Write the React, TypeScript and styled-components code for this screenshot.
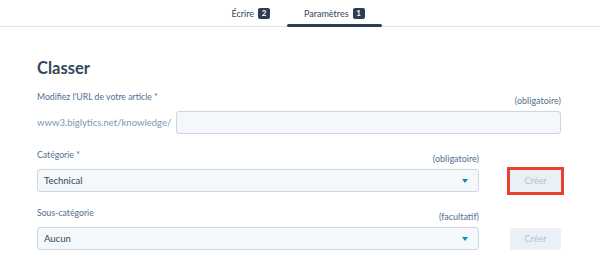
import React from "react";
import styled, { createGlobalStyle } from "styled-components";

const Global = createGlobalStyle`
  html, body { margin: 0; padding: 0; background: #fff; }
  body { font-family: Lato, "Open Sans", sans-serif; color: #33475b; }
`;

const Page = styled.div`
  width: 600px;
  height: 280px;
  overflow: hidden;
  background: #fff;
`;

const TabBar = styled.nav`
  display: flex;
  justify-content: center;
  height: 26px;
  border-bottom: 1px solid #dfe3eb;
  padding-right: 4px;
`;

const Tab = styled.div<{ $active?: boolean }>`
  display: flex;
  align-items: center;
  gap: 4px;
  padding: 0 17px;
  height: 26px;
  box-sizing: border-box;
  font-size: 9px;
  color: #33475b;
  position: relative;
  &::after {
    content: "";
    display: ${(p) => (p.$active ? "block" : "none")};
    position: absolute;
    left: 0;
    right: 0;
    bottom: -1px;
    height: 3px;
    border-radius: 2px;
    background: #2d3e50;
  }
`;

const Badge = styled.span`
  display: inline-flex;
  align-items: center;
  justify-content: center;
  width: 12px;
  height: 11px;
  border-radius: 2px;
  background: #2d3e50;
  color: #fff;
  font-size: 8px;
  font-weight: 700;
`;

const Main = styled.main`
  padding: 31px 39px 0 37px;
`;

const Heading = styled.h2`
  margin: 0 0 14px;
  font-size: 16.5px;
  line-height: 20px;
  font-weight: 700;
  color: #33475b;
`;

const Field = styled.div`
  margin-bottom: 16px;
`;

const FieldHead = styled.div<{ $narrow?: boolean }>`
  display: flex;
  justify-content: space-between;
  height: 14px;
  margin-bottom: 5px;
  margin-right: ${(p) => (p.$narrow ? "82px" : "0")};
`;

const Label = styled.label`
  font-size: 8.7px;
  line-height: 10px;
  color: #516f90;
  align-self: flex-start;
`;

const Hint = styled.span`
  font-size: 9px;
  line-height: 10px;
  color: #516f90;
  align-self: flex-end;
`;

const UrlRow = styled.div`
  display: flex;
  align-items: center;
  gap: 5px;
`;

const Prefix = styled.span`
  font-size: 9.5px;
  color: #7c98b6;
  white-space: nowrap;
`;

const TextInput = styled.div`
  flex: 1;
  height: 23px;
  box-sizing: border-box;
  background: #f5f8fa;
  border: 1px solid #cbd6e2;
  border-radius: 3px;
`;

const SelectRow = styled.div`
  display: grid;
  grid-template-columns: 1fr 51px;
  column-gap: 31px;
  align-items: center;
`;

const Select = styled.div`
  display: flex;
  align-items: center;
  justify-content: space-between;
  height: 23px;
  box-sizing: border-box;
  padding: 0 10px 0 6px;
  background: #f5f8fa;
  border: 1px solid #cbd6e2;
  border-radius: 3px;
  font-size: 9.5px;
  color: #33475b;
`;

const Caret = styled.span`
  width: 0;
  height: 0;
  border-left: 3.5px solid transparent;
  border-right: 3.5px solid transparent;
  border-top: 4px solid #0091ae;
`;

const ButtonWrap = styled.div<{ $highlight?: boolean }>`
  position: relative;
  &::after {
    content: "";
    display: ${(p) => (p.$highlight ? "block" : "none")};
    position: absolute;
    left: -3px;
    right: -3px;
    top: -3px;
    bottom: -3px;
    border: 3px solid #e8412e;
  }
`;

const Button = styled.button`
  display: block;
  width: 51px;
  height: 22px;
  border: none;
  border-radius: 2px;
  background: #eaf0f6;
  color: #b0c1d4;
  font-family: Lato, "Open Sans", sans-serif;
  font-size: 9px;
  padding: 0;
`;

export default function App() {
  return (
    <Page>
      <Global />
      <TabBar>
        <Tab>
          Écrire <Badge>2</Badge>
        </Tab>
        <Tab $active>
          Paramètres <Badge>1</Badge>
        </Tab>
      </TabBar>
      <Main>
        <Heading>Classer</Heading>
        <Field>
          <FieldHead>
            <Label>Modifiez l'URL de votre article *</Label>
            <Hint>(obligatoire)</Hint>
          </FieldHead>
          <UrlRow>
            <Prefix>www3.biglytics.net/knowledge/</Prefix>
            <TextInput />
          </UrlRow>
        </Field>
        <Field>
          <FieldHead $narrow>
            <Label>Catégorie *</Label>
            <Hint>(obligatoire)</Hint>
          </FieldHead>
          <SelectRow>
            <Select>
              Technical <Caret />
            </Select>
            <ButtonWrap $highlight>
              <Button>Créer</Button>
            </ButtonWrap>
          </SelectRow>
        </Field>
        <Field>
          <FieldHead $narrow>
            <Label>Sous-catégorie</Label>
            <Hint>(facultatif)</Hint>
          </FieldHead>
          <SelectRow>
            <Select>
              Aucun <Caret />
            </Select>
            <ButtonWrap>
              <Button>Créer</Button>
            </ButtonWrap>
          </SelectRow>
        </Field>
      </Main>
    </Page>
  );
}
